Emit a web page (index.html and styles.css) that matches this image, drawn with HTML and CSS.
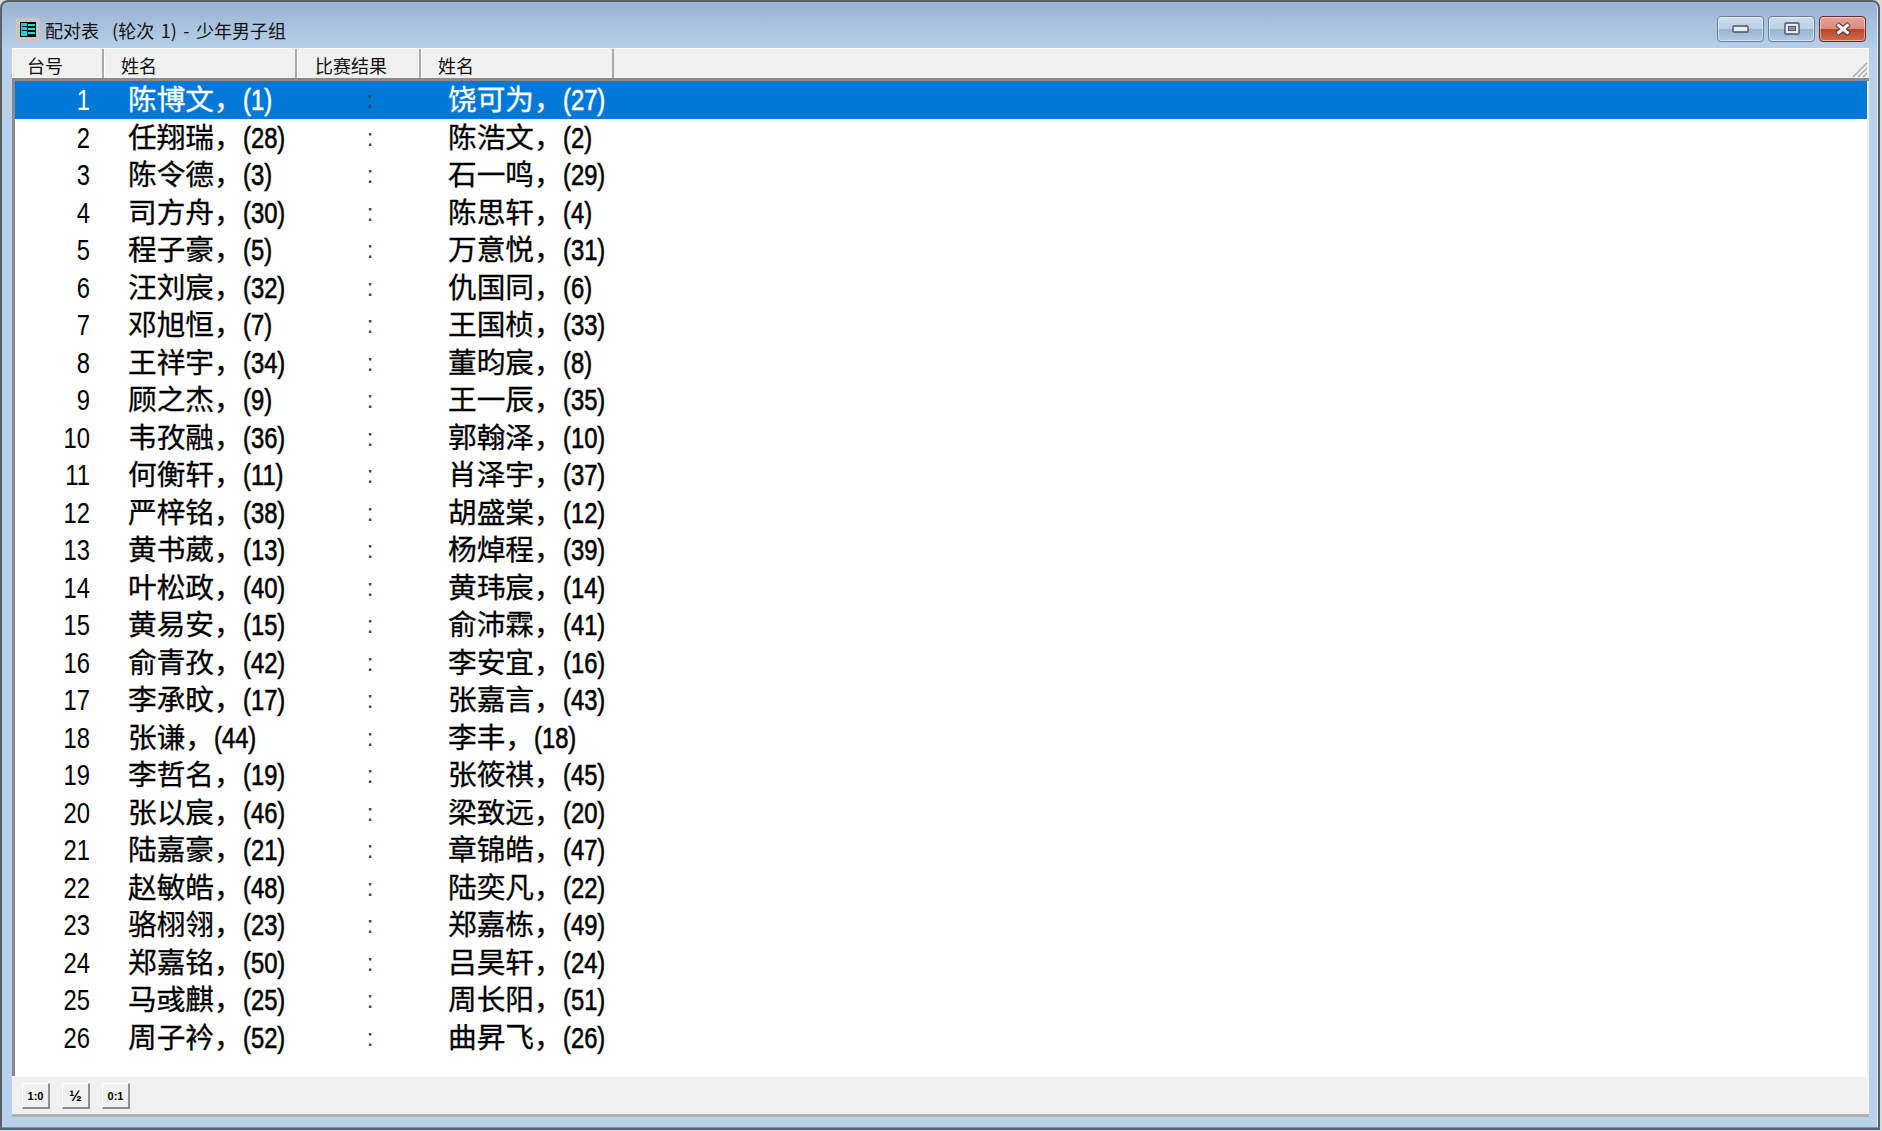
FILE: index.html
```html
<!DOCTYPE html>
<html lang="zh-CN">
<head>
<meta charset="utf-8">
<title>配对表</title>
<link rel="stylesheet" href="styles.css">
</head>
<body>
<div class="window">
  <div class="titlebar">
    <svg class="appicon" width="24" height="24" viewBox="0 0 24 24">
      <rect width="24" height="24" fill="#c6c6c6"/>
      <rect x="4" y="4" width="16" height="15" fill="#000"/>
      <rect x="5" y="5" width="6" height="13" fill="#00d8d0"/>
      <rect x="12" y="6" width="7" height="2" fill="#00e8e0"/>
      <rect x="12" y="10" width="7" height="2" fill="#00e8e0"/>
      <rect x="12" y="14" width="7" height="2" fill="#00e8e0"/>
      <rect x="6" y="8" width="5" height="1" fill="#000"/>
      <rect x="6" y="12" width="5" height="1" fill="#000"/>
    </svg>
    <span class="title">配对表&nbsp; (轮次 1) - 少年男子组</span>
    <div class="caption">
      <div class="capbtn">
        <svg width="18" height="10" viewBox="0 0 18 10"><rect x="1" y="2" width="15" height="6" rx="1" fill="#e8edf3" stroke="#4a5666" stroke-width="1.4"/></svg>
      </div>
      <div class="capbtn">
        <svg width="18" height="14" viewBox="0 0 18 14"><rect x="2" y="1" width="14" height="11" rx="1" fill="#e8edf3" stroke="#4a5666" stroke-width="1.4"/><rect x="5.500" y="4.500" width="7" height="4" fill="#7d97b5" stroke="#4a5666"/></svg>
      </div>
      <div class="capbtn close">
        <svg width="18" height="14" viewBox="0 0 18 14"><path d="M3 2 L15 12 M15 2 L3 12" stroke="#4a3a3a" stroke-width="5"/><path d="M3.500 2.500 L14.500 11.500 M14.500 2.500 L3.500 11.500" stroke="#f4f4f4" stroke-width="3"/></svg>
      </div>
    </div>
  </div>
  <div class="client">
    <div class="header">
      <div class="hcell w-no">台号</div>
      <div class="hcell w-name">姓名</div>
      <div class="hcell w-res">比赛结果</div>
      <div class="hcell w-name2">姓名</div>
      <div class="hfill">
        <svg class="grip" width="16" height="16" viewBox="0 0 16 16"><path d="M1 15 L15 1 M6 15 L15 6 M11 15 L15 11" stroke="#a8a8a8" stroke-width="1.4"/></svg>
      </div>
    </div>
    <div class="list">
      <div class="row selected"><span class="no">1</span><span class="p"><b>陈博文，</b><i>(1)</i></span><span class="c">:</span><span class="p q"><b>饶可为，</b><i>(27)</i></span></div>
      <div class="row"><span class="no">2</span><span class="p"><b>任翔瑞，</b><i>(28)</i></span><span class="c">:</span><span class="p q"><b>陈浩文，</b><i>(2)</i></span></div>
      <div class="row"><span class="no">3</span><span class="p"><b>陈令德，</b><i>(3)</i></span><span class="c">:</span><span class="p q"><b>石一鸣，</b><i>(29)</i></span></div>
      <div class="row"><span class="no">4</span><span class="p"><b>司方舟，</b><i>(30)</i></span><span class="c">:</span><span class="p q"><b>陈思轩，</b><i>(4)</i></span></div>
      <div class="row"><span class="no">5</span><span class="p"><b>程子豪，</b><i>(5)</i></span><span class="c">:</span><span class="p q"><b>万意悦，</b><i>(31)</i></span></div>
      <div class="row"><span class="no">6</span><span class="p"><b>汪刘宸，</b><i>(32)</i></span><span class="c">:</span><span class="p q"><b>仇国同，</b><i>(6)</i></span></div>
      <div class="row"><span class="no">7</span><span class="p"><b>邓旭恒，</b><i>(7)</i></span><span class="c">:</span><span class="p q"><b>王国桢，</b><i>(33)</i></span></div>
      <div class="row"><span class="no">8</span><span class="p"><b>王祥宇，</b><i>(34)</i></span><span class="c">:</span><span class="p q"><b>董昀宸，</b><i>(8)</i></span></div>
      <div class="row"><span class="no">9</span><span class="p"><b>顾之杰，</b><i>(9)</i></span><span class="c">:</span><span class="p q"><b>王一辰，</b><i>(35)</i></span></div>
      <div class="row"><span class="no">10</span><span class="p"><b>韦孜融，</b><i>(36)</i></span><span class="c">:</span><span class="p q"><b>郭翰泽，</b><i>(10)</i></span></div>
      <div class="row"><span class="no">11</span><span class="p"><b>何衡轩，</b><i>(11)</i></span><span class="c">:</span><span class="p q"><b>肖泽宇，</b><i>(37)</i></span></div>
      <div class="row"><span class="no">12</span><span class="p"><b>严梓铭，</b><i>(38)</i></span><span class="c">:</span><span class="p q"><b>胡盛棠，</b><i>(12)</i></span></div>
      <div class="row"><span class="no">13</span><span class="p"><b>黄书葳，</b><i>(13)</i></span><span class="c">:</span><span class="p q"><b>杨焯程，</b><i>(39)</i></span></div>
      <div class="row"><span class="no">14</span><span class="p"><b>叶松政，</b><i>(40)</i></span><span class="c">:</span><span class="p q"><b>黄玮宸，</b><i>(14)</i></span></div>
      <div class="row"><span class="no">15</span><span class="p"><b>黄易安，</b><i>(15)</i></span><span class="c">:</span><span class="p q"><b>俞沛霖，</b><i>(41)</i></span></div>
      <div class="row"><span class="no">16</span><span class="p"><b>俞青孜，</b><i>(42)</i></span><span class="c">:</span><span class="p q"><b>李安宜，</b><i>(16)</i></span></div>
      <div class="row"><span class="no">17</span><span class="p"><b>李承旼，</b><i>(17)</i></span><span class="c">:</span><span class="p q"><b>张嘉言，</b><i>(43)</i></span></div>
      <div class="row"><span class="no">18</span><span class="p"><b>张谦，</b><i>(44)</i></span><span class="c">:</span><span class="p q"><b>李丰，</b><i>(18)</i></span></div>
      <div class="row"><span class="no">19</span><span class="p"><b>李哲名，</b><i>(19)</i></span><span class="c">:</span><span class="p q"><b>张筱祺，</b><i>(45)</i></span></div>
      <div class="row"><span class="no">20</span><span class="p"><b>张以宸，</b><i>(46)</i></span><span class="c">:</span><span class="p q"><b>梁致远，</b><i>(20)</i></span></div>
      <div class="row"><span class="no">21</span><span class="p"><b>陆嘉豪，</b><i>(21)</i></span><span class="c">:</span><span class="p q"><b>章锦皓，</b><i>(47)</i></span></div>
      <div class="row"><span class="no">22</span><span class="p"><b>赵敏皓，</b><i>(48)</i></span><span class="c">:</span><span class="p q"><b>陆奕凡，</b><i>(22)</i></span></div>
      <div class="row"><span class="no">23</span><span class="p"><b>骆栩翎，</b><i>(23)</i></span><span class="c">:</span><span class="p q"><b>郑嘉栋，</b><i>(49)</i></span></div>
      <div class="row"><span class="no">24</span><span class="p"><b>郑嘉铭，</b><i>(50)</i></span><span class="c">:</span><span class="p q"><b>吕昊轩，</b><i>(24)</i></span></div>
      <div class="row"><span class="no">25</span><span class="p"><b>马彧麒，</b><i>(25)</i></span><span class="c">:</span><span class="p q"><b>周长阳，</b><i>(51)</i></span></div>
      <div class="row"><span class="no">26</span><span class="p"><b>周子衿，</b><i>(52)</i></span><span class="c">:</span><span class="p q"><b>曲昇飞，</b><i>(26)</i></span></div>
    </div>
    <div class="toolbar">
      <div class="tool">1:0</div>
      <div class="tool half">½</div>
      <div class="tool">0:1</div>
    </div>
  </div>
</div>
</body>
</html>
```

FILE: styles.css
```css
* { box-sizing: border-box; }
html, body { margin: 0; padding: 0; background: #d9d9d9; overflow: hidden; }
body { font-family: "Liberation Sans", "Noto Sans CJK SC", sans-serif; color: #000; }

.window {
  width: 1880px;
  height: 1130px;
  border: 2px solid #5c6167;
  border-radius: 8px 8px 0 0;
  background: linear-gradient(#9ab3d0 0, #b9d1ea 50px);
  padding: 0 9px 11px 10px;
  display: flex;
  flex-direction: column;
  box-shadow: inset 0 -1px 0 #19c0d0, inset -1px 0 0 #d8e8f6;
}

.titlebar { height: 46px; padding-top: 10px; display: flex; align-items: center; flex: none; }
.appicon { margin: 0 0 0 4px; flex: none; }
.title {
  margin-left: 5px;
  font-size: 18px;
  word-spacing: 2.500px;
  font-family: "Noto Sans CJK SC", "Liberation Sans", sans-serif;
  color: #111;
}
.caption { margin-left: auto; margin-right: 3px; display: flex; gap: 4px; margin-top: -2px; }
.capbtn {
  width: 47px; height: 26px;
  border: 1px solid #6e7f95;
  border-radius: 4px;
  display: flex; align-items: center; justify-content: center;
  background: linear-gradient(#cfdded 0, #bccfe5 48%, #98b2cf 50%, #b4cbe4 100%);
  box-shadow: inset 0 0 0 1px rgba(255,255,255,.45);
}
.capbtn.close {
  border-color: #6b2a30;
  background: linear-gradient(#e8a49a 0, #d98a7e 48%, #bf4325 50%, #cf6a50 100%);
}

.client { flex: 1; display: flex; flex-direction: column; min-height: 0; }

.header {
  height: 33px; flex: none;
  display: flex;
  background: #f0f0f0;
  border-top: 1px solid #fff;
  border-bottom: 3px solid #8a8a8a;
  font-family: "Noto Sans CJK SC", "Liberation Sans", sans-serif;
  font-size: 18px;
  line-height: 1;
  color: #111;
}
.hcell {
  height: 100%;
  border-right: 2px solid #a9a9a9;
  border-left: 1px solid #fff;
  display: flex; align-items: center;
  padding-top: 3px;
}
.w-no { width: 92px; padding-left: 14px; }
.w-name { width: 193px; padding-left: 16px; }
.w-res { width: 124px; padding-left: 17px; }
.w-name2 { width: 193px; padding-left: 16px; }
.hfill { flex: 1; display: flex; justify-content: flex-end; align-items: flex-end; }
.grip { margin-right: 1px; }

.list {
  flex: 1;
  background: #fff;
  border-left: 3px solid #8a8a8a;
  border-right: 2px solid #f0f0f0;
  min-height: 0;
}
.row {
  height: 37.5px;
  display: grid;
  grid-template-columns: 75px 238px 84px 1fr;
  align-items: start;
  font-size: 29px;
  line-height: 38px;
  white-space: nowrap;
}
.row.selected { background: #0078d7; color: #fff; }
.no { text-align: right; transform: scaleX(.82); transform-origin: right center; }
.p { padding-left: 38px; }
.p.q { padding-left: 36px; }
.p i {
  font-style: normal;
  display: inline-block;
  transform: scaleX(.82);
  transform-origin: left center;
  -webkit-text-stroke: .6px currentColor;
}
.p b {
  font-family: "Noto Sans CJK SC", sans-serif;
  font-size: 28.700px;
  line-height: 1;
  font-weight: 400;
  -webkit-text-stroke: .3px currentColor;
}
.c { text-align: center; color: #444; font-size: 24px; }

.toolbar {
  height: 41px; flex: none;
  display: flex; gap: 12px;
  align-items: flex-start;
  background: #f0f0f0;
  border-top: 1px solid #f8f8f8;
  border-bottom: 3px solid #b0b0b0;
  padding: 6px 0 0 10px;
}
.tool {
  width: 28px; height: 26px;
  background: #f0f0f0;
  border-top: 1px solid #fff;
  border-left: 1px solid #fff;
  border-right: 2px solid #8e8e8e;
  border-bottom: 2px solid #8e8e8e;
  font-size: 11px; font-weight: 700;
  display: flex; align-items: center; justify-content: center;
}
.tool.half { font-size: 15px; }
```
